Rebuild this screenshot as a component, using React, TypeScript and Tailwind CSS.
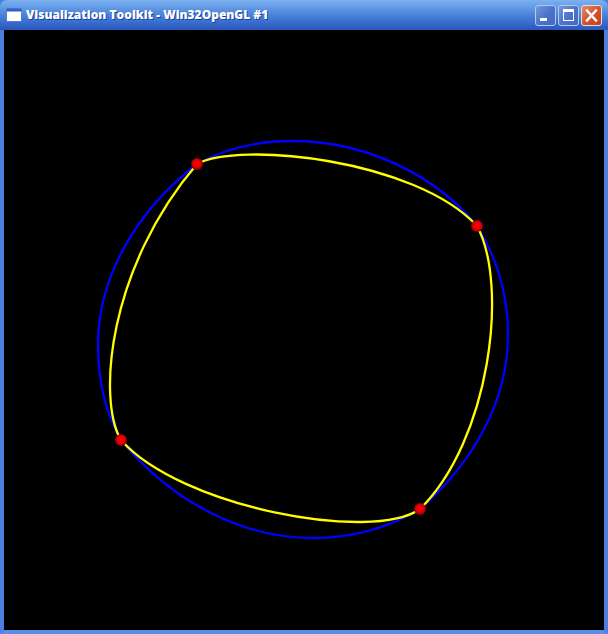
import React from "react";

const points = [
  [197, 164],
  [477, 226],
  [420, 509],
  [121, 440],
];

function WinButton({ kind }: { kind: "min" | "max" | "close" }) {
  const bg =
    kind === "close"
      ? "bg-gradient-to-br from-[#e08a70] via-[#d5532a] to-[#c2401c]"
      : "bg-gradient-to-br from-[#7399dd] via-[#4c74cc] to-[#4468c2]";
  const line = kind === "close" ? "border-[#eadcd8]" : "border-[#b4c8ec]";
  return (
    <div className={`w-[21px] h-[21px] rounded-[3px] border ${line} flex items-center justify-center ${bg}`}>
      <svg width="19" height="19" viewBox="0 0 19 19">
        {kind === "min" && <rect x="4" y="12" width="7" height="3" fill="#fff" />}
        {kind === "max" && (
          <>
            <rect x="4.5" y="3.5" width="10" height="11" fill="none" stroke="#fff" strokeWidth="1" />
            <rect x="4" y="3" width="11" height="3" fill="#fff" />
          </>
        )}
        {kind === "close" && (
          <path d="M5 4.5 L14 14.5 M14 4.5 L5 14.5" stroke="#fff" strokeWidth="2.4" strokeLinecap="square" fill="none" />
        )}
      </svg>
    </div>
  );
}

export default function App() {
  return (
    <div className="w-[608px] h-[634px] flex flex-col overflow-hidden bg-[#4a7fe0]">
      <div className="h-[30px] shrink-0 flex items-center pl-[6px] pr-[6px] rounded-t-[7px] bg-gradient-to-b from-[#7cb2f0] via-[#4a82da] to-[#2a56be]">
        <svg width="16" height="14" viewBox="0 0 16 14" className="shrink-0">
          <rect x="0.5" y="0.5" width="15" height="13" rx="1" fill="#fff" stroke="#2b54b4" strokeWidth="0.6" />
          <rect x="0.5" y="0.5" width="15" height="3" fill="#2f62cf" />
        </svg>
        <span className="ml-[4px] text-white text-[12px] font-extrabold whitespace-nowrap [font-family:'Open_Sans','DejaVu_Sans',sans-serif] [text-shadow:1px_1px_0_#1c3f9c]">
          Visualization Toolkit - Win32OpenGL #1
        </span>
        <div className="ml-auto flex gap-[2px]">
          <WinButton kind="min" />
          <WinButton kind="max" />
          <WinButton kind="close" />
        </div>
      </div>
      <div className="flex-1 border-x-[4px] border-b-[4px] border-x-[#4a7fe0] border-b-[#5a8ce4] bg-black">
        <svg width="600" height="600" viewBox="4 30 600 600" className="block">
          <defs>
            <radialGradient id="ball" cx="50%" cy="48%" r="50%">
              <stop offset="0%" stopColor="#ff0000" />
              <stop offset="60%" stopColor="#e80000" />
              <stop offset="100%" stopColor="#800000" />
            </radialGradient>
          </defs>
          <path
            d="M197 164 C226 148 258 141 293 141 C365 141 436 175 477 226 C497 258 508 295 508 335 C508 400 474 462 420 509 C388 528 351 538 313 538 C240 538 170 500 121 440 C105 412 98 379 98 345 C98 278 135 212 197 164 Z"
            fill="none"
            stroke="#0000ff"
            strokeWidth="2.3"
          />
          <path
            d="M197 164 C238 141 415 159 477 226 C509 285 490 440 420 509 C372 543 180 507 121 440 C97 400 108 268 197 164 Z"
            fill="none"
            stroke="#ffff00"
            strokeWidth="2.3"
          />
          {points.map(([x, y]) => (
            <circle key={x} cx={x} cy={y} r="6" fill="url(#ball)" />
          ))}
        </svg>
      </div>
    </div>
  );
}
